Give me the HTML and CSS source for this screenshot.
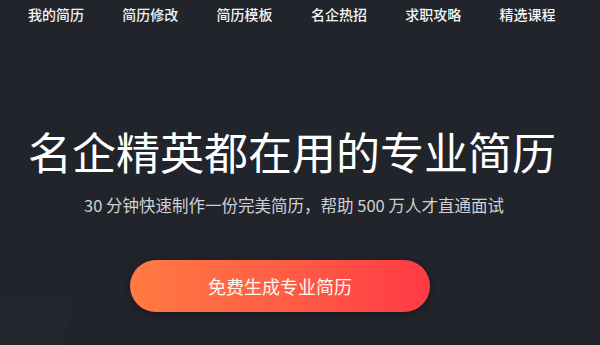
FILE: index.html
```html
<!DOCTYPE html>
<html lang="zh-CN">
<head>
<meta charset="utf-8">
<title>名企精英都在用的专业简历</title>
<link rel="stylesheet" href="styles.css">
</head>
<body>
<div class="page">
  <nav class="nav">
    <a class="nav-item">我的简历</a>
    <a class="nav-item">简历修改</a>
    <a class="nav-item">简历模板</a>
    <a class="nav-item">名企热招</a>
    <a class="nav-item">求职攻略</a>
    <a class="nav-item">精选课程</a>
  </nav>
  <section class="hero">
    <h1 class="title">名企精英都在用的专业简历</h1>
    <p class="subtitle">30 分钟快速制作一份完美简历，帮助 500 万人才直通面试</p>
    <a class="cta">免费生成专业简历</a>
  </section>
  <div class="deco"></div>
</div>
</body>
</html>
```

FILE: styles.css
```css
* { box-sizing: border-box; }
html, body {
  margin: 0;
  padding: 0;
  background: #21242b;
}
body {
  width: 600px;
  height: 345px;
  overflow: hidden;
  font-family: "Noto Sans CJK SC", "Noto Sans", "Liberation Sans", sans-serif;
  color: #fff;
}
.page {
  position: relative;
  height: 345px;
  overflow: hidden;
}
.nav {
  display: flex;
  gap: 38.3px;
  padding-left: 28px;
  height: 28px;
  align-items: center;
}
.nav-item {
  font-size: 14px;
  line-height: 28px;
  color: #f4f4f4;
  font-weight: 500;
  white-space: nowrap;
}
.hero {
  position: relative;
  z-index: 1;
  display: flex;
  flex-direction: column;
  align-items: center;
  padding-right: 16px;
  margin-top: 95px;
}
.title {
  margin: 0;
  font-size: 44px;
  line-height: 56px;
  font-weight: 400;
  color: #fff;
}
.subtitle {
  margin: 14px 0 0 4px;
  font-size: 16.5px;
  line-height: 24px;
  color: #cfd1d6;
}
.cta {
  margin-top: 43px;
  margin-right: 24px;
  width: 300px;
  height: 52px;
  line-height: 52px;
  border-radius: 26px;
  text-align: center;
  font-size: 18px;
  color: #fff8ef;
  background: linear-gradient(90deg, #ff7b43 0%, #ff5e45 50%, #ff3a44 100%);
  box-shadow: 0 2px 8px rgba(0, 0, 0, 0.35);
}
.deco {
  position: absolute;
  left: -40px;
  top: 300px;
  width: 95px;
  height: 120px;
  background: #23262d;
  transform: skewX(-20deg);
}
```
